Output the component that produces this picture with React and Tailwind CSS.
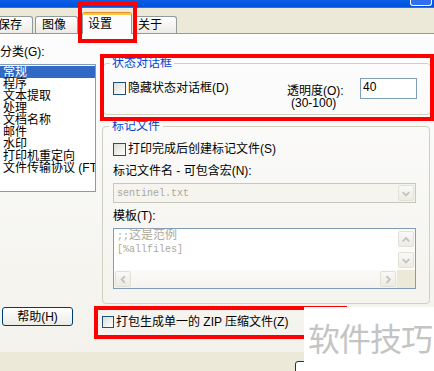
import React from "react";

const Check = ({ size = 13 }) => (
    <span
        className={`inline-block shrink-0 border border-[#1c5180] bg-linear-to-br from-[#dcdcd7] to-white ${size === 13 ? "w-[13px] h-[13px]" : "w-[12px] h-[12px]"}`}
    />
)

const arrows = {
    up: "M4 9.5 L7.5 6 L11 9.5",
    down: "M4 6 L7.5 9.5 L11 6",
    left: "M9.5 4 L6 7.5 L9.5 11",
    right: "M6 4 L9.5 7.5 L6 11",
}

const ScrollBtn = ({ dir }) => (
    <div className="w-[16px] h-[16px] rounded-[2px] border border-[#e3e1d7] bg-linear-to-b from-[#f9f9f6] to-[#ecebe4] flex items-center justify-center">
        <svg width="15" height="15" viewBox="0 0 15 15">
            <path d={arrows[dir]} stroke="#c4c4ba" strokeWidth="2" fill="none" />
        </svg>
    </div>
)

const Tab = ({ label, className }) => (
    <div className={`h-[17px] pt-[2px] leading-[13px] border border-b-0 border-[#919b9c] rounded-t-[3px] bg-linear-to-b from-white to-[#ecebe5] ${className}`}>
        {label}
    </div>
)

const categories = ["常规", "程序", "文本提取", "处理", "文档名称", "邮件", "水印", "打印机重定向", "文件传输协议 (FTP)"]

export default function App() {
    return <div className="relative w-[434px] h-[371px] overflow-hidden bg-[#ece9d8] text-[12px] text-black font-['Liberation_Sans','Noto_Sans_CJK_SC',sans-serif]">
        {/* title bar, cut off */}
        <div className="h-[8px] bg-linear-to-b from-[#0a5de6] to-[#0052dc] border-b border-[#2c6ee8] flex justify-end">
            <div className="w-[22px] h-[6px] mr-[2px] border border-t-0 border-white rounded-b-[3px] bg-[#2f6ff0]" />
        </div>

        {/* tabs */}
        <div className="h-[25px] flex items-end">
            <Tab label="保存" className="ml-[-9px] w-[42px] pl-[6px]" />
            <Tab label="图像" className="ml-[2px] w-[43px] pl-[6px]" />
            <div className="relative z-10 ml-[4px] w-[50px] h-[22px] -mb-[1px] border-x border-[#919b9c] rounded-t-[3px] bg-[#fcfcfe] overflow-hidden">
                <div className="h-[3px] bg-[#ffc83c] border-t border-[#e68b2c]" />
                <div className="pl-[5px] pt-[3px] leading-[13px]">设置</div>
            </div>
            <Tab label="关于" className="ml-[1px] w-[44px] pl-[4px]" />
        </div>

        {/* page body */}
        <div className="h-[319px] border-t border-[#919b9c] bg-linear-to-b from-[#fdfdfe] to-[#f3f2ec] flex flex-col">
            <div className="h-[270px] flex">
                <div className="w-[97px] pt-[12px]">
                    <div className="leading-[12px] whitespace-nowrap">分类(G):</div>
                    <div className="mt-[6px] ml-[-1px] w-[97px] h-[128px] border border-[#7f9db9] bg-white pt-[1px] overflow-hidden">
                        {categories.map((c, i) => (
                            <div key={c} className={`h-[12px] leading-[12px] pl-[3px] whitespace-nowrap ${i === 0 ? "bg-[#316ac5] text-white" : ""}`}>{c}</div>
                        ))}
                    </div>
                </div>

                <div className="ml-[5px]">
                    <fieldset className="mt-[23px] ml-[1px] w-[328px] h-[58px] border border-[#d0d0bf] rounded-[4px]">
                        <legend className="ml-[6px] px-[2px] leading-[12px] text-[#0046d5]">状态对话框</legend>
                        <div className="mt-[9px] pl-[9px] flex items-start">
                            <div className="w-[174px] mt-[4px] h-[13px] flex items-center gap-[2px]">
                                <Check />
                                <span className="leading-[13px] whitespace-nowrap">隐藏状态对话框(D)</span>
                            </div>
                            <div className="w-[73px] mt-[7px] leading-[12px]">
                                <div className="whitespace-nowrap">透明度(O):</div>
                                <div className="pl-[4px]">(30-100)</div>
                            </div>
                            <div className="w-[57px] h-[21px] border border-[#7f9db9] bg-white pl-[2px] pt-[2px] leading-[13px]">40</div>
                        </div>
                    </fieldset>

                    <fieldset className="mt-[5px] w-[328px] h-[184px] border border-[#d0d0bf] rounded-[4px]">
                        <legend className="ml-[6px] px-[3px] leading-[12px] text-[#0046d5]">标记文件</legend>
                        <div className="pl-[10px]">
                            <div className="mt-[11px] h-[13px] flex items-center gap-[2px]">
                                <Check />
                                <span className="leading-[13px] whitespace-nowrap">打印完成后创建标记文件(S)</span>
                            </div>
                            <div className="mt-[9px] leading-[12px] whitespace-nowrap">标记文件名 - 可包含宏(N):</div>
                            <div className="mt-[6px] w-[303px] h-[20px] border border-[#c9c7ba] bg-[#f5f4ef] flex items-center justify-between pl-[3px] pr-[1px]">
                                <span className="font-['Liberation_Mono',monospace] text-[10px] text-[#aca899]">sentinel.txt</span>
                                <ScrollBtn dir="down" />
                            </div>
                            <div className="mt-[7px] leading-[12px]">模板(T):</div>
                            <div className="mt-[6px] w-[303px] h-[61px] border border-[#7f9db9] bg-white flex flex-col">
                                <div className="h-[41px] flex">
                                    <div className="flex-1 pl-[3px] pt-[1px] text-[#aca899] font-['Liberation_Mono','Noto_Sans_CJK_SC',monospace] text-[10px] leading-[13px]">
                                        <div>;;<span className="text-[12px]">这是范例</span></div>
                                        <div>[%allfiles]</div>
                                    </div>
                                    <div className="w-[17px] pt-[2px] flex flex-col gap-[5px] bg-[#fbfbf9]">
                                        <ScrollBtn dir="up" />
                                        <ScrollBtn dir="down" />
                                    </div>
                                </div>
                                <div className="h-[18px] flex items-center bg-linear-to-b from-[#fbfbf9] to-[#f4f3ee]">
                                    <div className="ml-[1px]"><ScrollBtn dir="left" /></div>
                                    <div className="flex-1" />
                                    <ScrollBtn dir="right" />
                                    <div className="w-[18px] h-full ml-[1px] bg-[#ece9d8]" />
                                </div>
                            </div>
                        </div>
                    </fieldset>
                </div>
            </div>

            <div className="flex items-start">
                <div className="mt-[3px] ml-[2px] w-[71px] h-[19px] border border-[#003c74] rounded-[3px] bg-linear-to-b from-white to-[#ecebe6] flex items-center justify-center leading-[12px]">帮助(H)</div>
                <div className="mt-[12px] ml-[29px] h-[12px] flex items-center gap-[2px]">
                    <Check size={12} />
                    <span className="leading-[12px] whitespace-nowrap">打包生成单一的 ZIP 压缩文件(Z)</span>
                </div>
            </div>
        </div>

        {/* dialog buttons row, mostly hidden */}
        <div className="ml-[295px] mt-[9px] w-[75px] h-[23px] border border-[#003c74] rounded-[3px] bg-white" />

        {/* red annotations */}
        <div className="absolute left-[78px] top-[2px] w-[59px] h-[41px] border-4 border-[#f00]" />
        <div className="absolute left-[100px] top-[54px] w-[334px] h-[67px] border-4 border-[#f00]" />
        <div className="absolute left-[94px] top-[306px] w-[253px] h-[33px] border-4 border-[#f00]" />

        {/* watermark */}
        <div className="absolute left-[304px] top-[307px] w-[130px] h-[64px] bg-white pl-[4px] pt-[13px]">
            <span className="text-[32px] leading-[40px] tracking-[-1px] text-[#c4c4c4] whitespace-nowrap">软件技巧</span>
        </div>
    </div>
}
